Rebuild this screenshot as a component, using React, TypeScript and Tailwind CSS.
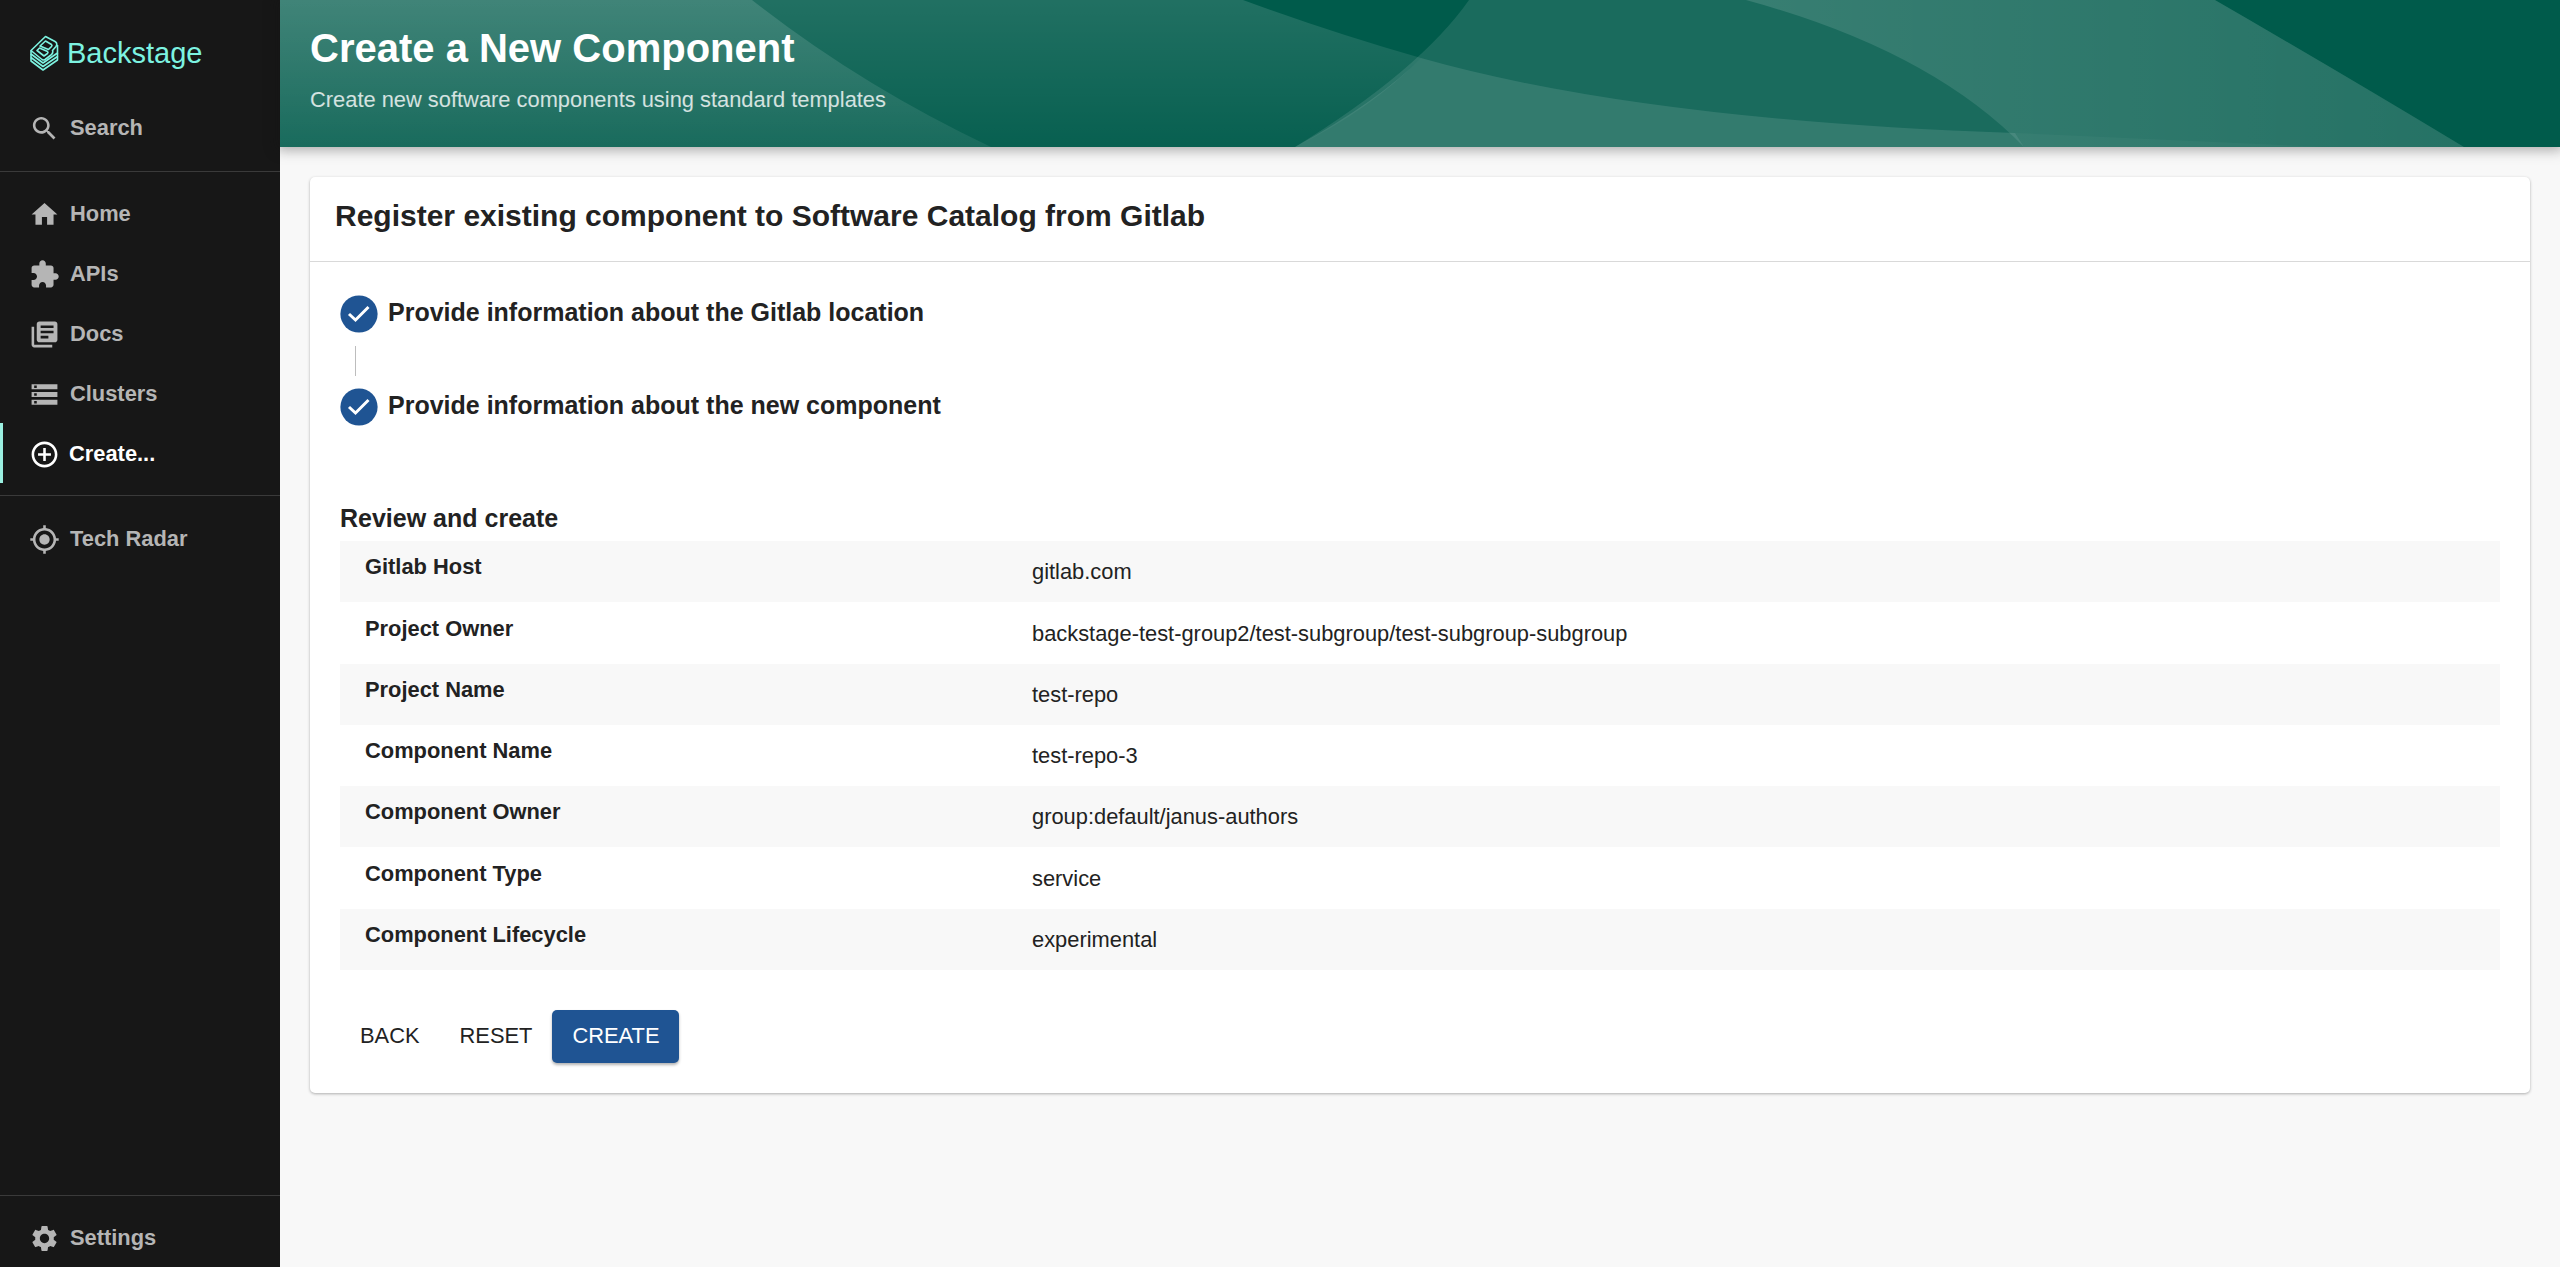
import type { ReactNode } from "react";

const font = "font-['Liberation_Sans',Arial,sans-serif]";

const icons: Record<string, string> = {
  search:
    "M15.5 14h-.79l-.28-.27C15.41 12.59 16 11.11 16 9.5 16 5.91 13.09 3 9.5 3S3 5.91 3 9.5 5.91 16 9.5 16c1.61 0 3.09-.59 4.23-1.57l.27.28v.79l5 4.99L20.49 19l-4.99-5zm-6 0C7.01 14 5 11.99 5 9.5S7.01 5 9.5 5 14 7.01 14 9.5 11.99 14 9.5 14z",
  home: "M10 20v-6h4v6h5v-8h3L12 3 2 12h3v8z",
  apis: "M20.5 11H19V7c0-1.1-.9-2-2-2h-4V3.5C13 2.12 11.88 1 10.5 1S8 2.12 8 3.5V5H4c-1.1 0-1.99.9-1.99 2v3.8H3.5c1.49 0 2.7 1.21 2.7 2.7s-1.21 2.7-2.7 2.7H2V20c0 1.1.9 2 2 2h3.8v-1.5c0-1.49 1.21-2.7 2.7-2.7 1.49 0 2.7 1.21 2.7 2.7V22H17c1.1 0 2-.9 2-2v-4h1.5c1.38 0 2.5-1.12 2.5-2.5S21.88 11 20.5 11z",
  docs: "M4 6H2v14c0 1.1.9 2 2 2h14v-2H4V6zm16-4H8c-1.1 0-2 .9-2 2v12c0 1.1.9 2 2 2h12c1.1 0 2-.9 2-2V4c0-1.1-.9-2-2-2zm-1 9H9V9h10v2zm-4 4H9v-2h6v2zm4-8H9V5h10v2z",
  clusters:
    "M2 20h20v-4H2v4zm2-3h2v2H4v-2zM2 4v4h20V4H2zm4 3H4V5h2v2zm-4 7h20v-4H2v4zm2-3h2v2H4v-2z",
  create:
    "M13 7h-2v4H7v2h4v4h2v-4h4v-2h-4V7zm-1-5C6.48 2 2 6.48 2 12s4.48 10 10 10 10-4.48 10-10S17.52 2 12 2zm0 18c-4.41 0-8-3.59-8-8s3.59-8 8-8 8 3.59 8 8-3.59 8-8 8z",
  radar:
    "M12 8c-2.21 0-4 1.79-4 4s1.79 4 4 4 4-1.79 4-4-1.79-4-4-4zm8.94 3c-.46-4.17-3.77-7.48-7.94-7.94V1h-2v2.06C6.83 3.52 3.52 6.83 3.06 11H1v2h2.06c.46 4.17 3.77 7.48 7.94 7.94V23h2v-2.06c4.17-.46 7.48-3.77 7.94-7.94H23v-2h-2.06zM12 19c-3.87 0-7-3.13-7-7s3.13-7 7-7 7 3.13 7 7-3.13 7-7 7z",
  settings:
    "M19.14 12.94c.04-.3.06-.61.06-.94 0-.32-.02-.64-.07-.94l2.03-1.58c.18-.14.23-.41.12-.61l-1.92-3.32c-.12-.22-.37-.29-.59-.22l-2.39.96c-.5-.38-1.03-.7-1.62-.94l-.36-2.54c-.04-.24-.24-.41-.48-.41h-3.84c-.24 0-.43.17-.47.41l-.36 2.54c-.59.24-1.13.57-1.62.94l-2.39-.96c-.22-.08-.47 0-.59.22L2.74 8.87c-.12.21-.08.47.12.61l2.03 1.58c-.05.3-.09.63-.09.94s.02.64.07.94l-2.03 1.58c-.18.14-.23.41-.12.61l1.92 3.32c.12.22.37.29.59.22l2.39-.96c.5.38 1.03.7 1.62.94l.36 2.54c.05.24.24.41.48.41h3.84c.24 0 .44-.17.47-.41l.36-2.54c.59-.24 1.13-.56 1.62-.94l2.39.96c.22.08.47 0 .59-.22l1.92-3.32c.12-.22.07-.47-.12-.61l-2.01-1.58zM12 15.6c-1.98 0-3.6-1.62-3.6-3.6s1.62-3.6 3.6-3.6 3.6 1.62 3.6 3.6-1.62 3.6-3.6 3.6z",
};

const reviewRows = [
  ["Gitlab Host", "gitlab.com"],
  ["Project Owner", "backstage-test-group2/test-subgroup/test-subgroup-subgroup"],
  ["Project Name", "test-repo"],
  ["Component Name", "test-repo-3"],
  ["Component Owner", "group:default/janus-authors"],
  ["Component Type", "service"],
  ["Component Lifecycle", "experimental"],
];

function Logo() {
  return (
    <svg width="30" height="36" viewBox="0 0 30 36" fill="none" stroke="#7df3e1" strokeWidth="1.6" strokeLinejoin="round">
      <path d="M1 15.5 L15.5 1.5 L25 6.5 Q28 8.5 26 11.5 L22.5 15.5 Q23.5 18 21 20 L15 24.5 Q13.5 25.5 12 24.5 Z" />
      <path d="M10 11 L15.5 6 L21.5 9.5 Q22.5 10.5 21.5 11.5 L18.5 14.5 Z" />
      <path d="M7 15.5 L9.5 13 L17.5 16.5 Q18.5 17.5 17.5 18.5 L14 21 Z" />
      <path d="M1 15.5 V19 L13 28 L27.5 18 V10" />
      <path d="M1 19 V22.5 L13 31.5 L27.5 21.5 V18" />
      <path d="M1 22.5 V26 L13 35 L27.5 25 V21.5" />
    </svg>
  );
}

function NavItem({ icon, label, active }: { icon: string; label: string; active?: boolean }) {
  return (
    <div
      className={`flex h-[60px] items-center pt-[2px] text-[21.875px] font-bold ${
        active ? "gap-[9px] border-l-[3px] border-[#9bf0e1] pl-[26px] text-white" : "gap-[10px] pl-[29px] text-[#b5b5b5]"
      }`}
    >
      <svg width="31" height="31" viewBox="0 0 24 24" fill="currentColor">
        <path d={icons[icon]} />
      </svg>
      <span>{label}</span>
    </div>
  );
}

function Divider() {
  return <div className="h-px bg-[#3a3a3a]" />;
}

function Step({ children }: { children: ReactNode }) {
  return (
    <div className="flex h-[38px] items-center gap-[10px]">
      <svg width="38" height="38" viewBox="0 0 38 38">
        <circle cx="19" cy="19" r="18.6" fill="#1f5493" />
        <path d="M9 19 L15.5 25 L28.5 12" fill="none" stroke="#fff" strokeWidth="3" />
      </svg>
      <span className="-mt-[3px] text-[25px] font-bold text-[#222222]">{children}</span>
    </div>
  );
}

function HeaderArt() {
  return (
    <svg className="absolute inset-0 h-full w-full" viewBox="280 0 2280 147" preserveAspectRatio="none">
      <defs>
        <linearGradient id="fade1" x1="0" y1="0" x2="0" y2="1">
          <stop offset="0" stopColor="#fff" stopOpacity="0.13" />
          <stop offset="1" stopColor="#fff" stopOpacity="0.03" />
        </linearGradient>
        <linearGradient id="fade2" x1="0" y1="0" x2="0" y2="1">
          <stop offset="0" stopColor="#fff" stopOpacity="0.14" />
          <stop offset="1" stopColor="#fff" stopOpacity="0.07" />
        </linearGradient>
        <linearGradient id="fade3" x1="0" y1="0" x2="1" y2="0">
          <stop offset="0" stopColor="#fff" stopOpacity="0.13" />
          <stop offset="1" stopColor="#fff" stopOpacity="0.05" />
        </linearGradient>
      </defs>
      <rect x="280" y="0" width="2280" height="147" fill="#005b4b" />
      <path d="M1469 0 L2215 0 Q2345 75 2464 147 L1295 147 Q1420 70 1469 0 Z" fill="#fff" fillOpacity="0.1" />
      <path d="M1746 0 L2215 0 Q2345 75 2464 147 L2024 147 Q1930 50 1746 0 Z" fill="url(#fade3)" />
      <path d="M1421 58 Q1640 120 2015 133 L2024 147 L1295 147 Q1380 100 1421 58 Z" fill="#fff" fillOpacity="0.11" />
      <path d="M2015 133 L2327 147 L2024 147 Z" fill="#fff" fillOpacity="0.03" />
      <path d="M280 0 L1243 0 Q1330 32 1421 58 Q1370 110 1295 147 L280 147 Z" fill="url(#fade1)" />
      <path d="M280 0 L752 0 Q860 85 991 147 L280 147 Z" fill="url(#fade2)" />
    </svg>
  );
}

export default function App() {
  return (
    <div className={`flex h-screen w-full overflow-hidden bg-[#f8f8f8] ${font}`}>
      {/* sidebar */}
      <div className="flex h-full w-[280px] shrink-0 flex-col bg-[#171717]">
        <div className="flex h-[97px] items-center gap-[7px] pl-[30px] pt-[9px]">
          <Logo />
          <span className="pt-[2px] text-[29px] text-[#7df3e1]">Backstage</span>
        </div>
        <NavItem icon="search" label="Search" />
        <div className="h-[14px]" />
        <Divider />
        <div className="h-[11px]" />
        <NavItem icon="home" label="Home" />
        <NavItem icon="apis" label="APIs" />
        <NavItem icon="docs" label="Docs" />
        <NavItem icon="clusters" label="Clusters" />
        <NavItem icon="create" label="Create..." active />
        <div className="h-[12px]" />
        <Divider />
        <div className="h-[12px]" />
        <NavItem icon="radar" label="Tech Radar" />
        <div className="flex-1" />
        <Divider />
        <div className="h-[11px]" />
        <NavItem icon="settings" label="Settings" />
      </div>

      {/* main */}
      <div className="flex min-w-0 flex-1 flex-col">
        <div className="relative h-[147px] shrink-0 shadow-[0_0_12px_3px_rgba(20,20,20,0.35)]">
          <HeaderArt />
          <div className="relative pl-[30px] pt-[24px]">
            <div className="text-[40px] leading-[48px] font-bold text-white">Create a New Component</div>
            <div className="mt-[15px] text-[21.875px] leading-[26px] text-white/80">
              Create new software components using standard templates
            </div>
          </div>
        </div>

        <div className="px-[30px] pt-[30px]">
          <div className="rounded-[5px] bg-white shadow-[0_1px_3px_rgba(0,0,0,0.3)]">
            <div className="flex h-[85px] items-center border-b border-[#d9d9d9] px-[25px]">
              <span className="-mt-[7px] text-[30px] font-bold text-[#222222]">
                Register existing component to Software Catalog from Gitlab
              </span>
            </div>

            <div className="px-[30px] pt-[33px] pb-[30px]">
              <Step>Provide information about the Gitlab location</Step>
              <div className="ml-[15px] mt-[13px] mb-[12px] h-[30px] w-px bg-[#bdbdbd]" />
              <Step>Provide information about the new component</Step>

              <div className="mt-[77px] text-[25px] leading-[30px] font-bold text-[#222222]">Review and create</div>

              <div className="mt-[8px]">
                {reviewRows.map(([label, value], i) => (
                  <div
                    key={label}
                    className={`flex h-[61.3px] items-center pl-[25px] pt-[2px] ${i % 2 === 0 ? "bg-[#f8f8f8]" : "bg-white"}`}
                  >
                    <span className="-mt-[10px] w-[667px] text-[21.875px] font-bold text-[#222222]">{label}</span>
                    <span className="text-[21.875px] text-[#222222]">{value}</span>
                  </div>
                ))}
              </div>

              <div className="mt-[40px] flex h-[53px] items-center text-[21.875px] text-[#222222]">
                <span className="px-[20px]">BACK</span>
                <span className="px-[20px]">RESET</span>
                <span className="flex h-[53px] items-center rounded-[5px] bg-[#1f5493] px-[20px] text-white shadow-[0_2px_3px_rgba(0,0,0,0.3)]">
                  CREATE
                </span>
              </div>
            </div>
          </div>
        </div>
      </div>
    </div>
  );
}
